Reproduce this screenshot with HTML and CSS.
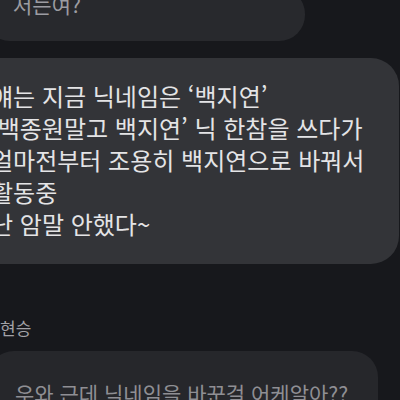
FILE: index.html
```html
<!DOCTYPE html>
<html lang="ko">
<head>
    <meta charset="UTF-8">
    <meta name="viewport" content="width=device-width, initial-scale=1.0">
    <title>채팅</title>
    <link rel="stylesheet" href="styles.css">
</head>
<body>
    <div class="chat">
        <div class="bubble bubble-top">저는여?</div>
        <div class="bubble bubble-main">
            얘는 지금 닉네임은 ‘백지연’<br>
            ‘백종원말고 백지연’ 닉 한참을 쓰다가<br>
            얼마전부터 조용히 백지연으로 바꿔서<br>
            활동중<br>
            난 암말 안했다~
        </div>
        <div class="sender">현승</div>
        <div class="bubble bubble-reply">우와 근데 닉네임을 바꾼걸 어케알아??</div>
    </div>
</body>
</html>
```

FILE: styles.css
```css
body {
    margin: 0;
    padding: 0;
    background-color: #17181c;
    font-family: "Noto Sans CJK KR", "Noto Sans", sans-serif;
    overflow: hidden;
    height: 400px;
}
.chat {
    display: flex;
    flex-direction: column;
    align-items: flex-start;
}
.bubble {
    border-radius: 26px;
    font-size: 21px;
    line-height: 32px;
    white-space: nowrap;
}
.bubble-top {
    margin-top: -12px;
    margin-left: -16px;
    width: 321px;
    box-sizing: border-box;
    padding: 0 0 21px 29px;
    background-color: #28292d;
    color: #9c9ca1;
}
/* highlighted message, shown a bit larger */
.bubble-main {
    margin-top: 17px;
    margin-left: -30px;
    width: 429px;
    box-sizing: border-box;
    padding: 22px 0 24px 21px;
    background-color: #333438;
    color: #e4e4e6;
    font-size: 24px;
    border-radius: 28px;
}
.sender {
    margin-top: 53px;
    font-size: 17px;
    line-height: 22px;
    color: #a2a2a7;
}
.bubble-reply {
    margin-top: 12px;
    margin-left: -12px;
    width: 390px;
    box-sizing: border-box;
    padding: 26px 0 22px 27px;
    background-color: #26272b;
    color: #8f8f94;
}
```
